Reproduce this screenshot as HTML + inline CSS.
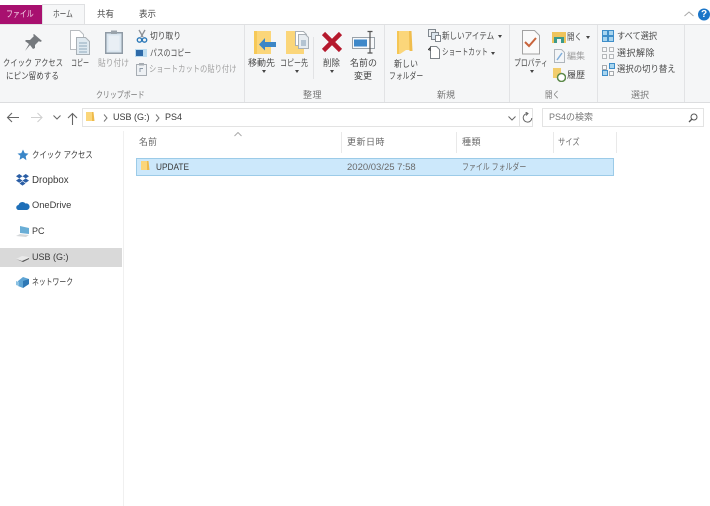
<!DOCTYPE html>
<html lang="ja"><head><meta charset="utf-8"><style>
html,body{margin:0;padding:0;background:#fff}
#p{position:relative;width:710px;height:506px;overflow:hidden;background:#fff;font-family:"Liberation Sans","Noto Sans CJK JP",sans-serif;font-size:9px;color:#484848}
#p div,#p svg{position:absolute}
.t{white-space:nowrap;line-height:13px;transform-origin:0 0}
.g{color:#777}
.l{color:#a0a0a0}
.d{color:#3a3a3a}
.h{color:#6a6a6a}
</style></head><body><div id="p">
<!-- tabs -->
<div style="left:0;top:5px;width:42px;height:19px;background:#a8106f"></div>
<div class="t" style="left:6px;top:8px;color:#f4d8ea;transform:scaleX(.77)">ファイル</div>
<div style="left:42px;top:4px;width:43px;height:21px;background:#f6f7f8;border:1px solid #dfe0e2;border-bottom:0;box-sizing:border-box"></div>
<div class="t" style="left:53px;top:8px;transform:scaleX(.74)">ホーム</div>
<div class="t" style="left:97px;top:8px;transform:scaleX(.94)">共有</div>
<div class="t" style="left:139px;top:8px;transform:scaleX(.94)">表示</div>
<!-- ribbon -->
<div style="left:0;top:24px;width:710px;height:79px;background:#f5f6f7;border-top:1px solid #dfe0e2;border-bottom:1px solid #dcdddf;box-sizing:border-box"></div>
<div style="left:244px;top:25px;width:1px;height:77px;background:#e2e3e5"></div>
<div style="left:384px;top:25px;width:1px;height:77px;background:#e2e3e5"></div>
<div style="left:509px;top:25px;width:1px;height:77px;background:#e2e3e5"></div>
<div style="left:597px;top:25px;width:1px;height:77px;background:#e2e3e5"></div>
<div style="left:684px;top:25px;width:1px;height:77px;background:#e2e3e5"></div>
<div style="left:313px;top:37px;width:1px;height:42px;background:#e2e3e5"></div>
<!-- clipboard -->
<svg style="left:24px;top:33px" width="19" height="19" viewBox="0 0 19 19"><path d="M10 1l8 7-2 1-1-1-4 4 0 3-2 1-3-4-5 6 4-7-4-3 1-1 4 0 4-4-1-1z" fill="#75797d"/></svg>
<div class="t" style="left:3px;top:57px;transform:scaleX(.81)">クイック アクセス</div>
<div class="t" style="left:6px;top:70px;transform:scaleX(.84)">にピン留めする</div>
<svg style="left:69px;top:29px" width="23" height="27" viewBox="0 0 23 27"><path d="M1.500 1.500h9l4 4v15h-13z" fill="#fff" stroke="#b8bcc0"/><path d="M7.500 8.500h9l4 4v13h-13z" fill="#dfe9f0" stroke="#a9b0b6"/><path d="M10 14h8M10 17h8M10 20h8M10 23h8" stroke="#8fa9bd"/></svg>
<div class="t" style="left:71px;top:57px;transform:scaleX(.67)">コピー</div>
<svg style="left:105px;top:30px" width="18" height="24" viewBox="0 0 18 24"><rect x=".75" y="2.750" width="16.500" height="20.500" fill="#d9e5ef" stroke="#8f9aa5" stroke-width="1.500"/><rect x="3.500" y="5.500" width="11" height="15" fill="#e9eff5"/><rect x="6" y="0.500" width="6" height="3.500" fill="#9aa3ab"/></svg>
<div class="t l" style="left:98px;top:57px;transform:scaleX(.86)">貼り付け</div>
<svg style="left:136px;top:29px" width="12" height="14" viewBox="0 0 12 14"><path d="M3 1l4 7M9 1L5 8" stroke="#8b9096" stroke-width="1.300" fill="none"/><circle cx="3.500" cy="11" r="2.200" fill="none" stroke="#2b78b8" stroke-width="1.400"/><circle cx="8.500" cy="11" r="2.200" fill="none" stroke="#2b78b8" stroke-width="1.400"/></svg>
<div class="t" style="left:150px;top:30px;transform:scaleX(.86)">切り取り</div>
<div style="left:135px;top:49px;width:12px;height:8px;background:#bcdcf0"></div>
<div style="left:136px;top:50px;width:7px;height:6px;background:#2e6aa8"></div>
<div class="t" style="left:150px;top:47px;transform:scaleX(.76)">パスのコピー</div>
<svg style="left:136px;top:63px" width="11" height="13" viewBox="0 0 11 13"><rect x=".5" y="1.500" width="10" height="11" fill="#eef1f4" stroke="#a7adb3"/><rect x="3" y="0" width="5" height="2.500" fill="#a7adb3"/><path d="M4 9V5.500h3" fill="none" stroke="#8a98a6"/></svg>
<div class="t l" style="left:149px;top:63px;transform:scaleX(.81)">ショートカットの貼り付け</div>
<div class="t g" style="left:96px;top:89px;transform:scaleX(.77)">クリップボード</div>
<!-- organize -->
<svg style="left:253px;top:30px" width="23" height="25" viewBox="0 0 23 25"><rect x="1" y="1" width="17" height="23" fill="#fbd67a"/><path d="M1 1h3v23H1z" fill="#f6c958"/><path d="M23 12h-11V8l-6 6.500L12 20.500V17h11z" fill="#3d87c6"/></svg>
<div class="t" style="left:248px;top:57px">移動先</div>
<div style="left:262px;top:70px;width:0;height:0;border:2px solid transparent;border-top:3px solid #444"></div>
<svg style="left:286px;top:29px" width="23" height="26" viewBox="0 0 23 26"><rect x="0" y="2" width="18" height="23" fill="#fbd67a"/><path d="M9.500 2.500h8l3 3v11h-11z" fill="#fff" stroke="#a9b0b6"/><path d="M12.500 5.500h7l3 3v11h-10z" fill="#e8edf1" stroke="#a9b0b6"/><path d="M15 12h5M15 14h5M15 16h5" stroke="#7f9cb4"/></svg>
<div class="t" style="left:280px;top:57px;transform:scaleX(.78)">コピー先</div>
<div style="left:295px;top:70px;width:0;height:0;border:2px solid transparent;border-top:3px solid #444"></div>
<svg style="left:321px;top:31px" width="22" height="22" viewBox="0 0 22 22"><path d="M2.500 2.500L19.500 19.500M19.500 2.500L2.500 19.500" stroke="#b5192d" stroke-width="4.500"/></svg>
<div class="t" style="left:323px;top:57px;transform:scaleX(.94)">削除</div>
<div style="left:330px;top:70px;width:0;height:0;border:2px solid transparent;border-top:3px solid #444"></div>
<svg style="left:352px;top:30px" width="25" height="24" viewBox="0 0 25 24"><rect x=".5" y="7.500" width="22" height="11" fill="#f7f9fb" stroke="#9aa2a9"/><rect x="2" y="9.500" width="13" height="7" fill="#3e88c9"/><path d="M15.500 1.500h5M15.500 23h5M18 1.500V23" stroke="#555" stroke-width="1.200" fill="none"/></svg>
<div class="t" style="left:350px;top:57px">名前の</div>
<div class="t" style="left:354px;top:70px">変更</div>
<div class="t g" style="left:303px;top:89px;letter-spacing:.5px">整理</div>
<!-- new -->
<svg style="left:397px;top:31px" width="17" height="24" viewBox="0 0 17 24"><path d="M0 0h14l1 19-6 0-6 4H0z" fill="#fbd67a"/><path d="M0 0h2v23H0z" fill="#f5c654"/><path d="M12 0h2.500l1 20h-3z" fill="#f0bd4d"/></svg>
<div class="t" style="left:394px;top:58px;transform:scaleX(.89)">新しい</div>
<div class="t" style="left:389px;top:70px;transform:scaleX(.76)">フォルダー</div>
<svg style="left:428px;top:29px" width="13" height="13" viewBox="0 0 13 13"><rect x=".5" y=".5" width="7" height="7" fill="#eef1f4" stroke="#80878e"/><rect x="3.500" y="3.500" width="7" height="7" fill="#dce6ee" stroke="#80878e"/><rect x="7.500" y="6.500" width="5" height="6" fill="#fff" stroke="#80878e"/></svg>
<div class="t" style="left:442px;top:30px;transform:scaleX(.84)">新しいアイテム</div>
<div style="left:498px;top:35px;width:0;height:0;border:2.500px solid transparent;border-top:3px solid #444"></div>
<svg style="left:428px;top:45px" width="12" height="14" viewBox="0 0 12 14"><path d="M2.500 1.500h6l3 3v9h-9z" fill="#fff" stroke="#7d8388"/><path d="M0 5l2-2v3" stroke="#333" fill="none"/></svg>
<div class="t" style="left:442px;top:46px;transform:scaleX(.73)">ショートカット</div>
<div style="left:491px;top:52px;width:0;height:0;border:2.500px solid transparent;border-top:3px solid #444"></div>
<div class="t g" style="left:437px;top:89px">新規</div>
<!-- open -->
<svg style="left:521px;top:30px" width="20" height="25" viewBox="0 0 20 25"><path d="M1.500 .5h12l5 5v18.500h-17z" fill="#fafafa" stroke="#a2a2a2"/><path d="M4 12l4 4 7-8" fill="none" stroke="#c8643c" stroke-width="2"/></svg>
<div class="t" style="left:514px;top:57px;transform:scaleX(.76)">プロパティ</div>
<div style="left:530px;top:70px;width:0;height:0;border:2px solid transparent;border-top:3px solid #444"></div>
<svg style="left:552px;top:31px" width="14" height="12" viewBox="0 0 14 12"><rect x="0" y="1" width="14" height="11" fill="#efc45c"/><rect x="2" y="6" width="10" height="6" fill="#3c9a8a"/><rect x="5" y="8" width="4" height="4" fill="#f3f3f3"/></svg>
<div class="t" style="left:567px;top:31px;transform:scaleX(.83)">開く</div>
<div style="left:586px;top:36px;width:0;height:0;border:2px solid transparent;border-top:3px solid #444"></div>
<svg style="left:554px;top:49px" width="11" height="14" viewBox="0 0 11 14"><path d="M.5.500h7l3 3v10h-10z" fill="#f3f5f7" stroke="#b0b6bc"/><path d="M3 11l5-7" stroke="#80aedb" stroke-width="1.500"/></svg>
<div class="t l" style="left:567px;top:50px">編集</div>
<svg style="left:553px;top:68px" width="13" height="14" viewBox="0 0 13 14"><path d="M0 0h8v10H0z" fill="#f2cd6c"/><circle cx="8.500" cy="9.500" r="4" fill="#fff" stroke="#5d8a4a" stroke-width="1.500"/></svg>
<div class="t" style="left:567px;top:69px">履歴</div>
<div class="t g" style="left:545px;top:89px;transform:scaleX(.83)">開く</div>
<!-- select -->
<svg style="left:602px;top:30px" width="12" height="12" viewBox="0 0 12 12"><rect width="12" height="12" fill="#3f8ec9"/><path d="M1 1h4v4H1zM7 1h4v4H7zM1 7h4v4H1zM7 7h4v4H7z" fill="#a8d5ef"/></svg>
<div class="t" style="left:617px;top:30px;transform:scaleX(.91)">すべて選択</div>
<svg style="left:602px;top:47px" width="12" height="12" viewBox="0 0 12 12"><path d="M.5.500h4v4h-4zM7.500.500h4v4h-4zM.5 7.500h4v4h-4zM7.500 7.500h4v4h-4z" fill="#fafafa" stroke="#b5b8bb"/></svg>
<div class="t" style="left:617px;top:47px;letter-spacing:.5px">選択解除</div>
<svg style="left:602px;top:63px" width="13" height="13" viewBox="0 0 13 13"><path d="M.5 7.500h5v5h-5zM7.500.500h5v5h-5z" fill="#a8d5ef" stroke="#3f8ec9"/><path d="M.5 2.500h4v4h-4zM7.500 8.500h4v4h-4z" fill="#fafafa" stroke="#a5a9ad"/></svg>
<div class="t" style="left:617px;top:63px;transform:scaleX(.93)">選択の切り替え</div>
<div class="t g" style="left:631px;top:89px">選択</div>
<!-- help -->
<svg style="left:683px;top:9px" width="12" height="10" viewBox="0 0 12 10"><path d="M1.500 7L6 3l4.500 4" fill="none" stroke="#a8a8a8"/></svg>
<svg style="left:698px;top:8px" width="12" height="13" viewBox="0 0 12 13"><circle cx="6" cy="6.500" r="6" fill="#1a75c8"/></svg>
<div style="left:698px;top:8px;width:12px;text-align:center;color:#fff;font-weight:700;font-size:10px;line-height:13px">?</div>
<!-- address -->
<svg style="left:6px;top:112px" width="13" height="11" viewBox="0 0 13 11"><path d="M6 1L1.500 5.500 6 10M1.500 5.500H13" fill="none" stroke="#666" stroke-width="1.100"/></svg>
<svg style="left:31px;top:112px" width="12" height="11" viewBox="0 0 12 11"><path d="M6.500 1L11 5.500 6.500 10M11 5.500H0" fill="none" stroke="#d0d0d0" stroke-width="1.100"/></svg>
<svg style="left:53px;top:115px" width="8" height="5" viewBox="0 0 8 5"><path d="M.5.500L4 4 7.500.500" fill="none" stroke="#666"/></svg>
<svg style="left:67px;top:112px" width="11" height="13" viewBox="0 0 11 13"><path d="M1 6L5.500 1.500 10 6M5.500 1.500V13" fill="none" stroke="#666" stroke-width="1.100"/></svg>
<div style="left:82px;top:108px;width:451px;height:19px;border:1px solid #e3e3e3;box-sizing:border-box;background:#fff"></div>
<svg style="left:86px;top:112px" width="9" height="11" viewBox="0 0 9 11"><path d="M0 0h7l1 9H0z" fill="#fbd67a"/><path d="M6 0h1.500l1 9H6z" fill="#eeba4a"/></svg>
<div style="left:519px;top:109px;width:1px;height:17px;background:#e3e3e3"></div>
<svg style="left:103px;top:114px" width="5" height="8" viewBox="0 0 5 8"><path d="M1 .5L4 4 1 7.500" fill="none" stroke="#777"/></svg>
<div class="t d" style="left:113px;top:111px">USB (G:)</div>
<svg style="left:155px;top:114px" width="5" height="8" viewBox="0 0 5 8"><path d="M1 .5L4 4 1 7.500" fill="none" stroke="#777"/></svg>
<div class="t d" style="left:165px;top:111px">PS4</div>
<svg style="left:508px;top:116px" width="8" height="5" viewBox="0 0 8 5"><path d="M.5.500L4 4 7.500.500" fill="none" stroke="#666"/></svg>
<svg style="left:522px;top:112px" width="11" height="12" viewBox="0 0 11 12"><path d="M5.500 1.500A4.300 4.300 0 1 0 9.800 6M3.500 0l2.500 1.500L4 3.500" fill="none" stroke="#666"/></svg>
<div style="left:542px;top:108px;width:162px;height:19px;border:1px solid #e3e3e3;box-sizing:border-box;background:#fff"></div>
<div class="t" style="left:549px;top:111px;color:#777">PS4の検索</div>
<svg style="left:688px;top:113px" width="10" height="10" viewBox="0 0 10 10"><circle cx="6" cy="4" r="3" fill="none" stroke="#555"/><path d="M4 6L1 9" stroke="#555" stroke-width="1.300"/></svg>
<!-- nav -->
<div style="left:123px;top:131px;width:1px;height:375px;background:#f0f0f0"></div>
<div style="left:0;top:248px;width:122px;height:19px;background:#d9d9d9"></div>
<svg style="left:17px;top:149px" width="12" height="12" viewBox="0 0 12 12"><path d="M6 .5l1.700 3.600 3.800.5-2.800 2.700.7 3.900L6 8.800l-3.400 1.900.7-3.900L.5 4.600l3.800-.5z" fill="#3a86c8"/></svg>
<div class="t d" style="left:32px;top:149px;transform:scaleX(.82)">クイック アクセス</div>
<svg style="left:16px;top:174px" width="13" height="12" viewBox="0 0 13 12"><path d="M3.250 0L6.500 2.200 3.250 4.400 0 2.200zM9.750 0L13 2.200 9.750 4.400 6.500 2.200zM3.250 4.400L6.500 6.600 3.250 8.800 0 6.600zM9.750 4.400L13 6.600 9.750 8.800 6.500 6.600zM6.500 7.300L9.500 9.500 6.500 11.600 3.500 9.500z" fill="#2a5ea5"/></svg>
<div class="t d" style="left:32px;top:174px;font-size:9.700px">Dropbox</div>
<svg style="left:16px;top:201px" width="14" height="9" viewBox="0 0 14 9"><path d="M3 9A2.500 2.500 0 0 1 2.500 4 4 4 0 0 1 9.500 2.500 3.200 3.200 0 0 1 11 9z" fill="#1e6fb8"/></svg>
<div class="t d" style="left:32px;top:199px;font-size:9.300px">OneDrive</div>
<svg style="left:16px;top:226px" width="14" height="12" viewBox="0 0 14 12"><path d="M4 0l9 2v6L4 7z" fill="#6aaed6"/><path d="M0 10l4-2 9 1-3 2z" fill="#d5d8da"/></svg>
<div class="t d" style="left:32px;top:225px">PC</div>
<svg style="left:16px;top:256px" width="13" height="6" viewBox="0 0 13 6"><path d="M0 3l6-3 7 1v2l-6 3z" fill="#e9e9e9"/><path d="M0 3l6 2 7-3v1l-6 3z" fill="#555"/></svg>
<div class="t d" style="left:32px;top:251px">USB (G:)</div>
<svg style="left:16px;top:276px" width="13" height="13" viewBox="0 0 13 13"><path d="M2 5l5-4 6 2v5l-6 4-5-2z" fill="#5ea4d4"/><path d="M7 5l6-2v5l-6 4z" fill="#2f78b5"/><path d="M0 5l3 1v4l-3-1z" fill="#8cc2e3"/></svg>
<div class="t d" style="left:32px;top:276px;transform:scaleX(.76)">ネットワーク</div>
<!-- columns -->
<svg style="left:234px;top:132px" width="8" height="5" viewBox="0 0 8 5"><path d="M.5 4L4 .5 7.500 4" fill="none" stroke="#aaa"/></svg>
<div class="t h" style="left:139px;top:136px">名前</div>
<div style="left:341px;top:132px;width:1px;height:21px;background:#e9e9e9"></div>
<div class="t h" style="left:347px;top:136px;letter-spacing:.5px">更新日時</div>
<div style="left:456px;top:132px;width:1px;height:21px;background:#e9e9e9"></div>
<div class="t h" style="left:462px;top:136px;letter-spacing:.5px">種類</div>
<div style="left:553px;top:132px;width:1px;height:21px;background:#e9e9e9"></div>
<div class="t h" style="left:558px;top:136px;transform:scaleX(.81)">サイズ</div>
<div style="left:616px;top:132px;width:1px;height:21px;background:#e9e9e9"></div>
<!-- row -->
<div style="left:136px;top:158px;width:478px;height:18px;background:#cce8fb;border:1px solid #9ccbe8;box-sizing:border-box"></div>
<svg style="left:141px;top:161px" width="9" height="11" viewBox="0 0 9 11"><path d="M0 0h7l1 9H0z" fill="#fbd67a"/><path d="M6 0h1.500l1 9H6z" fill="#eeba4a"/></svg>
<div class="t d" style="left:156px;top:161px;transform:scaleX(.92)">UPDATE</div>
<div class="t h" style="left:347px;top:161px;font-size:9.500px">2020/03/25 7:58</div>
<div class="t h" style="left:462px;top:161px;transform:scaleX(.77)">ファイル フォルダー</div>
</div></body></html>
